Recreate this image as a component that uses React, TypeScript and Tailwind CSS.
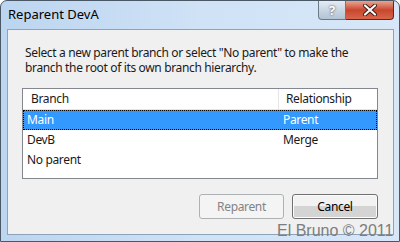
import React from "react";

const font = { fontFamily: '"Segoe UI", "Noto Sans", "Open Sans", sans-serif' };

export default function App() {
  return (
    <div
      className="relative w-[400px] h-[242px] overflow-hidden rounded-t-[7px] border border-[#4a5866] bg-gradient-to-r from-[#bcd5f0] via-[#cfe2f6] to-[#d7e7f8] text-[12px] tracking-[-0.35px] text-[#1a1a1a]"
      style={font}
    >
      {/* title bar */}
      <div className="flex h-[28px] items-start">
        <div className="pl-[7px] pt-[5px] text-[13px] leading-[16px] tracking-[0px] text-black">Reparent DevA</div>
        <div className="ml-auto mr-[5px] flex">
          <div className="flex h-[19px] w-[28px] items-center justify-center rounded-bl-[4px] border border-t-0 border-[#6c7a88] bg-gradient-to-b from-[#e4ecf4] via-[#c9d6e3] to-[#b4c4d4] text-[13px] font-bold leading-none text-white [text-shadow:0_0_2px_#333]">
            ?
          </div>
          <div className="flex h-[19px] w-[48px] items-center justify-center rounded-br-[4px] border border-l-0 border-t-0 border-[#5a2a22] bg-gradient-to-b from-[#e8a493] via-[#c9462c] to-[#d8664b]">
            <svg width="14" height="12" viewBox="0 0 14 12">
              <path d="M2 1.5 L12 10.5 M12 1.5 L2 10.5" stroke="#3a1a14" strokeWidth="4" strokeLinecap="round" />
              <path d="M2 1.5 L12 10.5 M12 1.5 L2 10.5" stroke="#ffffff" strokeWidth="2.2" strokeLinecap="round" />
            </svg>
          </div>
        </div>
      </div>

      {/* client area */}
      <div className="ml-[6px] h-[206px] w-[387px] border border-[#8da3b9] bg-[#f0f0f0]">
        <div className="pl-[17px] pt-[15px] text-[12px] leading-[15px] text-[#1a1a1a]">
          <div className="whitespace-nowrap">Select a new parent branch or select "No parent" to make the</div>
          <div className="whitespace-nowrap">branch the root of its own branch hierarchy.</div>
        </div>

        <div className="ml-[14px] mt-[13px] h-[91px] w-[356px] border border-[#828790] bg-white">
          <div className="flex h-[21px] border-b border-[#e5e5e5] leading-[20px]">
            <div className="w-[256px] border-r border-[#e5e5e5] pl-[8px]">Branch</div>
            <div className="pl-[7px]">Relationship</div>
          </div>
          <div className="flex h-[20px] items-center border border-dotted border-black bg-[#3399ff] text-white">
            <div className="w-[255px] pl-[3px]">Main</div>
            <div className="pl-[4px]">Parent</div>
          </div>
          <div className="flex h-[20px] items-center">
            <div className="w-[256px] pl-[4px]">DevB</div>
            <div className="pl-[4px]">Merge</div>
          </div>
          <div className="flex h-[20px] items-center">
            <div className="w-[256px] pl-[4px]">No parent</div>
          </div>
        </div>

        <div className="mt-[15px] flex justify-end gap-[8px] pr-[15px]">
          <div className="flex h-[25px] w-[85px] items-center justify-center rounded-[3px] border border-[#adb2b5] bg-[#f4f4f4] text-[#838383]">
            Reparent
          </div>
          <div className="flex h-[25px] w-[86px] items-center justify-center rounded-[3px] border border-[#707070] bg-gradient-to-b from-[#f2f2f2] from-50% to-[#d4d4d4] to-50% text-black shadow-[inset_0_0_0_1px_#fcfcfc]">
            Cancel
          </div>
        </div>
      </div>

      {/* watermark */}
      <div
        className="absolute left-[276px] top-[220px] whitespace-nowrap text-[16px] leading-[19px] tracking-[0px] text-[#7d7d7d]"
        style={{ fontFamily: '"Liberation Sans", Arial, sans-serif' }}
      >
        El Bruno © 2011
      </div>
    </div>
  );
}
